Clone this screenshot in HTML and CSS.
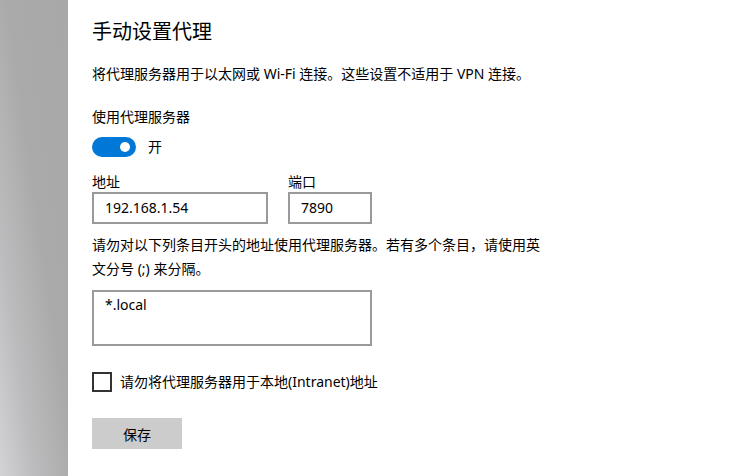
FILE: index.html
```html
<!DOCTYPE html>
<html lang="zh-CN">
<head>
<meta charset="utf-8">
<title>手动设置代理</title>
<link rel="stylesheet" href="styles.css">
</head>
<body>
<div class="app">
  <aside class="side"></aside>
  <main class="main">
    <h1 class="title">手动设置代理</h1>
    <p class="desc">将代理服务器用于以太网或 Wi-Fi 连接。这些设置不适用于 VPN 连接。</p>
    <div class="label">使用代理服务器</div>
    <div class="toggle-row">
      <span class="toggle"><span class="knob"></span></span>
      <span class="toggle-text">开</span>
    </div>
    <div class="fields">
      <div class="field">
        <div class="field-label">地址</div>
        <div class="input addr">192.168.1.54</div>
      </div>
      <div class="field">
        <div class="field-label">端口</div>
        <div class="input port">7890</div>
      </div>
    </div>
    <p class="para">请勿对以下列条目开头的地址使用代理服务器。若有多个条目，请使用英文分号 (;) 来分隔。</p>
    <div class="textarea">*.local</div>
    <div class="check-row">
      <span class="checkbox"></span>
      <span class="check-text">请勿将代理服务器用于本地(Intranet)地址</span>
    </div>
    <div class="btn">保存</div>
  </main>
</div>
</body>
</html>
```
FILE: styles.css
```css
html, body {
  margin: 0;
  padding: 0;
  background: #ffffff;
}
body {
  font-family: "Noto Sans", "Noto Sans CJK SC", sans-serif;
  font-size: 14px;
  color: #000000;
}
.app {
  display: flex;
  width: 754px;
  height: 476px;
  overflow: hidden;
}
.side {
  width: 68px;
  flex: none;
  background: linear-gradient(to top right, #d3d3d7 0%, #bcbcbe 25%, #aaaaaa 55%, #a8a8a8 100%);
}
.main {
  flex: 1;
  padding-left: 24px;
  display: flex;
  flex-direction: column;
  align-items: flex-start;
}
.title {
  margin: 18px 0 0;
  font-size: 20px;
  font-weight: normal;
  line-height: 28px;
}
.desc {
  margin: 18px 0 0;
  line-height: 20px;
}
.label {
  margin-top: 23px;
  line-height: 20px;
}
.toggle-row {
  margin-top: 10px;
  display: flex;
  align-items: center;
  gap: 12px;
  height: 20px;
}
.toggle {
  width: 44px;
  height: 20px;
  border-radius: 10px;
  background: #0078d7;
  display: flex;
  align-items: center;
  justify-content: flex-end;
  padding-right: 6px;
  box-sizing: border-box;
}
.knob {
  width: 10px;
  height: 10px;
  border-radius: 50%;
  background: #ffffff;
}
.toggle-text {
  line-height: 20px;
}
.fields {
  margin-top: 16px;
  display: flex;
  gap: 20px;
}
.field-label {
  line-height: 18px;
  margin-bottom: 1px;
}
.input {
  height: 32px;
  box-sizing: border-box;
  border: 2px solid #9a9a9a;
  padding: 0 11px;
  line-height: 28px;
}
.addr { width: 176px; }
.port { width: 84px; }
.para {
  margin: 9px 0 0;
  width: 460px;
  line-height: 24px;
}
.textarea {
  margin-top: 9px;
  width: 280px;
  height: 56px;
  box-sizing: border-box;
  border: 2px solid #9a9a9a;
  padding: 3px 11px;
  line-height: 20px;
}
.check-row {
  margin-top: 26px;
  display: flex;
  align-items: center;
  gap: 8px;
}
.checkbox {
  width: 20px;
  height: 20px;
  box-sizing: border-box;
  border: 2px solid #333333;
}
.check-text {
  line-height: 20px;
}
.btn {
  margin-top: 26px;
  width: 90px;
  height: 31px;
  background: #cccccc;
  display: flex;
  align-items: center;
  justify-content: center;
}
```
